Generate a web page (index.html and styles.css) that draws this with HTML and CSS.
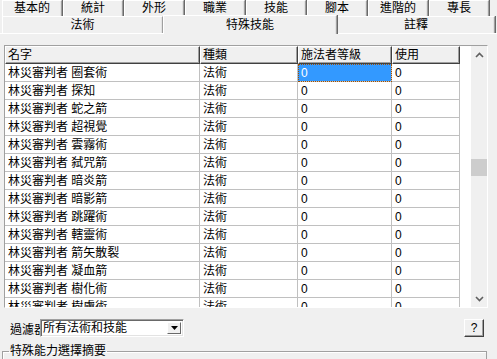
FILE: index.html
```html
<!DOCTYPE html>
<html lang="zh-Hant">
<head>
  <meta charset="UTF-8" />
  <title>特殊技能</title>
  <link rel="stylesheet" href="styles.css">
</head>
<body>
  <div class="window">
    <div class="tab-row top-row">
      <div class="tab">基本的</div>
      <div class="tab">統計</div>
      <div class="tab">外形</div>
      <div class="tab">職業</div>
      <div class="tab">技能</div>
      <div class="tab">腳本</div>
      <div class="tab">進階的</div>
      <div class="tab">專長</div>
    </div>
    <div class="tab-row front-row">
      <div class="tab wide-left">法術</div>
      <div class="tab active">特殊技能</div>
      <div class="tab wide-right">註釋</div>
    </div>

    <div class="panel">
      <div class="grid">
        <div class="grid-body">
          <table class="list">
            <thead>
              <tr>
                <th class="c-name">名字</th>
                <th class="c-type">種類</th>
                <th class="c-level">施法者等級</th>
                <th class="c-use">使用</th>
              </tr>
            </thead>
            <tbody id="rows"></tbody>
          </table>
        </div>
        <div class="scrollbar">
          <div class="arrow">
            <svg width="9" height="6" viewBox="0 0 9 6"><path d="M1 5 L4.5 1.5 L8 5" fill="none" stroke="#606060" stroke-width="1.6"/></svg>
          </div>
          <div class="track"><div class="thumb"></div></div>
          <div class="arrow">
            <svg width="9" height="6" viewBox="0 0 9 6"><path d="M1 1 L4.5 4.5 L8 1" fill="none" stroke="#606060" stroke-width="1.6"/></svg>
          </div>
        </div>
      </div>

      <div class="filter-row">
        <span class="filter-label">過濾器</span>
        <div class="combo">
          <span class="combo-text">所有法術和技能</span>
          <span class="combo-btn">
            <svg width="7" height="4" viewBox="0 0 7 4"><path d="M0 0 H7 L3.5 4 Z" fill="#000"/></svg>
          </span>
        </div>
        <button class="help">?</button>
      </div>

      <fieldset class="summary">
        <legend>特殊能力選擇摘要</legend>
      </fieldset>
    </div>
  </div>

  <script>
    const spells = [
      '圈套術', '探知', '蛇之箭', '超視覺', '雲霧術', '弑咒箭', '暗炎箭',
      '暗影箭', '跳躍術', '轄靈術', '箭矢散裂', '凝血箭', '樹化術', '樹膚術'
    ];
    const tbody = document.getElementById('rows');
    spells.forEach((s, i) => {
      const tr = document.createElement('tr');
      tr.innerHTML = `
        <td>林災審判者 ${s}</td>
        <td>法術</td>
        <td class="${i === 0 ? 'selected' : ''}">0</td>
        <td>0</td>`;
      tbody.appendChild(tr);
    });
  </script>
</body>
</html>
```

FILE: styles.css
```css
body {
  margin: 0;
  background: #f0f0f0;
  font-family: "Liberation Sans", "Noto Sans CJK TC", sans-serif;
  font-size: 12px;
  color: #000;
  width: 497px;
  height: 359px;
  overflow: hidden;
}
.window {
  display: flex;
  flex-direction: column;
}
.tab-row {
  display: flex;
  padding-left: 2px;
}
.top-row {
  height: 16px;
}
.tab {
  box-sizing: border-box;
  border-top: 1px solid #fff;
  border-left: 1px solid #fff;
  border-right: 1px solid #a0a0a0;
  box-shadow: inset -1px 0 0 #e3e3e3, 1px 0 0 #696969;
  background: #f0f0f0;
  text-align: center;
  line-height: 14px;
  margin-right: 1px;
}
.top-row .tab {
  width: 60px;
  height: 16px;
}
.front-row {
  height: 17px;
  align-items: flex-end;
}
.front-row .tab {
  height: 17px;
  line-height: 16px;
  margin-right: 0;
}
.wide-left {
  width: 161px;
}
.active {
  width: 174px;
  height: 19px !important;
  line-height: 18px !important;
  position: relative;
  top: 1px;
  z-index: 1;
}
.wide-right {
  width: 158px;
}
.panel {
  border-top: 1px solid #fff;
  padding: 11px 0 0 4px;
}
.grid {
  width: 484px;
  height: 263px;
  box-sizing: border-box;
  border: 1px solid #a0a0a0;
  border-right-color: #fff;
  border-bottom-color: #fff;
  display: flex;
  background: #fff;
}
.grid-body {
  width: 465px;
  overflow: hidden;
}
.list {
  border-collapse: separate;
  border-spacing: 0;
  table-layout: fixed;
  width: 455px;
}
.list th {
  height: 18px;
  box-sizing: border-box;
  padding: 0 0 0 2px;
  font-weight: normal;
  text-align: left;
  background: #f0f0f0;
  border-top: 1px solid #fff;
  border-left: 1px solid #fff;
  border-right: 1px solid #404040;
  border-bottom: 1px solid #404040;
  box-shadow: inset -1px -1px 0 #a0a0a0;
  line-height: 15px;
}
.c-name { width: 195px; }
.c-type { width: 98px; }
.c-level { width: 94px; }
.c-use { width: 68px; }
.list td {
  height: 18px;
  box-sizing: border-box;
  padding: 0 0 0 3px;
  border-right: 1px solid #c0c0c0;
  border-bottom: 1px solid #c0c0c0;
  line-height: 16px;
  white-space: nowrap;
  overflow: hidden;
}
.list td.selected {
  background: #3399ff;
  color: #fff;
  outline: 1px dotted #a05000;
  outline-offset: -1px;
}
.scrollbar {
  width: 16px;
  background: #f0f0f0;
  display: flex;
  flex-direction: column;
  margin-left: 1px;
}
.arrow {
  height: 17px;
  display: flex;
  align-items: center;
  justify-content: center;
}
.track {
  flex: 1;
  padding-top: 96px;
}
.thumb {
  height: 17px;
  background: #cdcdcd;
}
.filter-row {
  display: flex;
  align-items: center;
  height: 20px;
  margin-top: 10px;
  padding-left: 6px;
}
.filter-label {
  width: 30px;
  overflow: hidden;
  white-space: nowrap;
}
.combo {
  width: 144px;
  height: 18px;
  box-sizing: border-box;
  border: 1px solid #a0a0a0;
  border-right-color: #fff;
  border-bottom-color: #fff;
  box-shadow: inset 1px 1px 0 #696969, inset -1px -1px 0 #e3e3e3;
  background: #fff;
  display: flex;
  align-items: center;
  padding: 0 2px 0 2px;
}
.combo-text {
  flex: 1;
  line-height: 14px;
}
.combo-btn {
  width: 14px;
  height: 12px;
  box-sizing: border-box;
  background: #f0f0f0;
  border-top: 1px solid #fff;
  border-left: 1px solid #fff;
  border-right: 1px solid #696969;
  border-bottom: 1px solid #696969;
  display: flex;
  align-items: center;
  justify-content: center;
}
.help {
  margin-left: auto;
  margin-right: 13px;
  width: 20px;
  height: 18px;
  padding: 0;
  font: inherit;
  background: #f0f0f0;
  border: 1px solid #fff;
  border-right-color: #404040;
  border-bottom-color: #404040;
  box-shadow: inset -1px -1px 0 #a0a0a0;
}
.summary {
  margin: 6px 0 0 -2px;
  width: 485px;
  box-sizing: border-box;
  border: 1px solid #a0a0a0;
  box-shadow: 1px 1px 0 #fff inset;
  padding: 0;
  height: 30px;
}
.summary legend {
  padding: 0 1px;
  margin-left: 6px;
  line-height: 14px;
}
```
